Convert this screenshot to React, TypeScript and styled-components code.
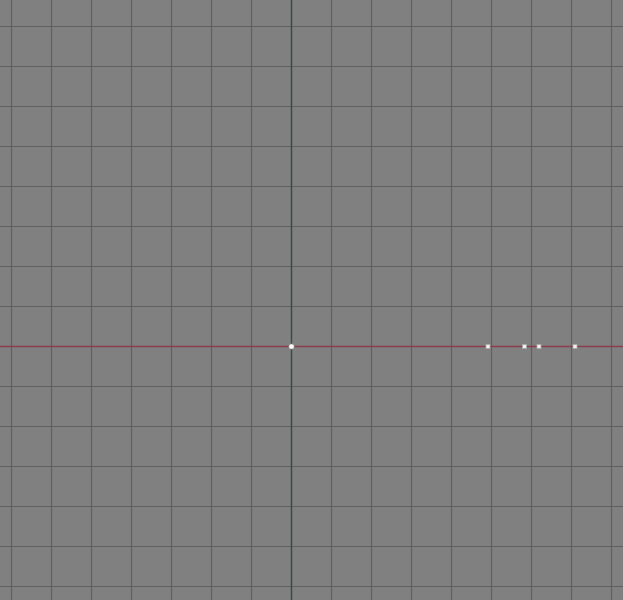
import React from "react";
import styled, { createGlobalStyle } from "styled-components";

const Global = createGlobalStyle`
  html, body { margin: 0; padding: 0; background: #808080; overflow: hidden; }
  body { font-family: "Liberation Sans", Arial, sans-serif; }
`;

const Viewport = styled.div`
  position: relative;
  width: 623px;
  height: 600px;
  background: #808080;
  overflow: hidden;
`;

const Canvas = styled.svg`
  display: block;
  width: 623px;
  height: 600px;
`;

const W = 623;
const H = 600;
const STEP = 40;
const OX = 291.5;
const OY = 346.5;

const vxs: number[] = [];
for (let x = 11.5; x < W; x += STEP) vxs.push(x);
const hys: number[] = [];
for (let y = 26.5; y < H; y += STEP) hys.push(y);

const points = [488, 524.5, 539, 575];

export default function App() {
  return (
    <>
      <Global />
      <Viewport>
        <Canvas viewBox={`0 0 ${W} ${H}`} xmlns="http://www.w3.org/2000/svg">
          {vxs.map((x) =>
            Math.abs(x - OX) < 1 ? null : (
              <line key={"v" + x} x1={x} y1={0} x2={x} y2={H} stroke="#606060" strokeWidth={1.2} />
            )
          )}
          {hys.map((y) =>
            Math.abs(y - OY) < 1 ? null : (
              <line key={"h" + y} x1={0} y1={y} x2={W} y2={y} stroke="#606060" strokeWidth={1.2} />
            )
          )}
          <line x1={0} y1={OY} x2={W} y2={OY} stroke="#8a3f4d" strokeWidth={1.4} />
          <line x1={OX} y1={0} x2={OX} y2={H} stroke="#2d5238" strokeWidth={1.4} />
          <circle cx={OX} cy={OY} r={2.6} fill="#ffffff" stroke="#9a9a9a" strokeWidth={0.6} />
          {points.map((px) => (
            <rect
              key={px}
              x={px - 2}
              y={OY - 2}
              width={4}
              height={4}
              fill="#f2f2f2"
              stroke="#a8a8a8"
              strokeWidth={0.8}
            />
          ))}
        </Canvas>
      </Viewport>
    </>
  );
}
